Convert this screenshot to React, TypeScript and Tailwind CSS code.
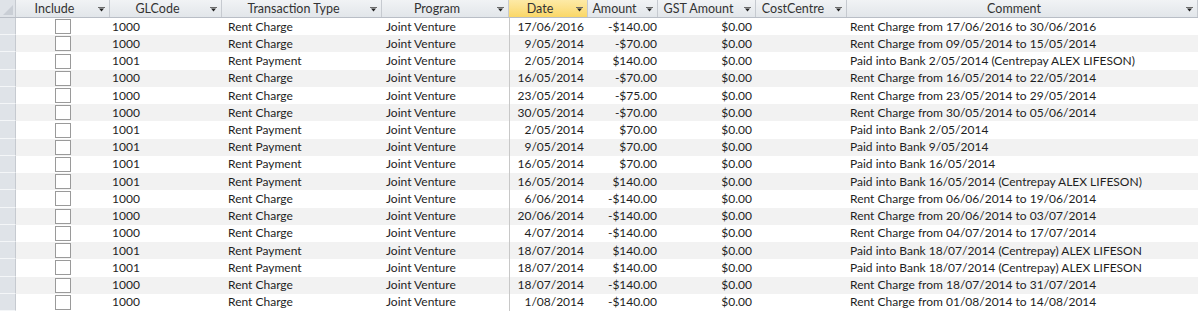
type Row = {
  gl: string;
  type: string;
  date: string;
  amount: string;
  comment: string;
};

const rows: Row[] = [
  { gl: '1000', type: 'Rent Charge', date: '17/06/2016', amount: '-$140.00', comment: 'Rent Charge from 17/06/2016 to 30/06/2016' },
  { gl: '1000', type: 'Rent Charge', date: '9/05/2014', amount: '-$70.00', comment: 'Rent Charge from 09/05/2014 to 15/05/2014' },
  { gl: '1001', type: 'Rent Payment', date: '2/05/2014', amount: '$140.00', comment: 'Paid into Bank 2/05/2014 (Centrepay ALEX LIFESON)' },
  { gl: '1000', type: 'Rent Charge', date: '16/05/2014', amount: '-$70.00', comment: 'Rent Charge from 16/05/2014 to 22/05/2014' },
  { gl: '1000', type: 'Rent Charge', date: '23/05/2014', amount: '-$75.00', comment: 'Rent Charge from 23/05/2014 to 29/05/2014' },
  { gl: '1000', type: 'Rent Charge', date: '30/05/2014', amount: '-$70.00', comment: 'Rent Charge from 30/05/2014 to 05/06/2014' },
  { gl: '1001', type: 'Rent Payment', date: '2/05/2014', amount: '$70.00', comment: 'Paid into Bank 2/05/2014' },
  { gl: '1001', type: 'Rent Payment', date: '9/05/2014', amount: '$70.00', comment: 'Paid into Bank 9/05/2014' },
  { gl: '1001', type: 'Rent Payment', date: '16/05/2014', amount: '$70.00', comment: 'Paid into Bank 16/05/2014' },
  { gl: '1001', type: 'Rent Payment', date: '16/05/2014', amount: '$140.00', comment: 'Paid into Bank 16/05/2014 (Centrepay ALEX LIFESON)' },
  { gl: '1000', type: 'Rent Charge', date: '6/06/2014', amount: '-$140.00', comment: 'Rent Charge from 06/06/2014 to 19/06/2014' },
  { gl: '1000', type: 'Rent Charge', date: '20/06/2014', amount: '-$140.00', comment: 'Rent Charge from 20/06/2014 to 03/07/2014' },
  { gl: '1000', type: 'Rent Charge', date: '4/07/2014', amount: '-$140.00', comment: 'Rent Charge from 04/07/2014 to 17/07/2014' },
  { gl: '1001', type: 'Rent Payment', date: '18/07/2014', amount: '$140.00', comment: 'Paid into Bank 18/07/2014 (Centrepay) ALEX LIFESON' },
  { gl: '1001', type: 'Rent Payment', date: '18/07/2014', amount: '$140.00', comment: 'Paid into Bank 18/07/2014 (Centrepay) ALEX LIFESON' },
  { gl: '1000', type: 'Rent Charge', date: '18/07/2014', amount: '-$140.00', comment: 'Rent Charge from 18/07/2014 to 31/07/2014' },
  { gl: '1000', type: 'Rent Charge', date: '1/08/2014', amount: '-$140.00', comment: 'Rent Charge from 01/08/2014 to 14/08/2014' },
];

const FilterArrow = () => (
  <svg width="7" height="5" viewBox="0 0 7 5" className="shrink-0">
    <rect x="0" y="0" width="7" height="1" fill="#6b6b6b" />
    <path d="M1 1.5 L6 1.5 L3.5 4.5 Z" fill="#222" />
  </svg>
);

const HeaderCell = ({ label, width, active = false }: { label: string; width: string; active?: boolean }) => (
  <div
    className={`${width} h-full flex items-center border-r border-[#c6cad0] ${
      active ? 'bg-gradient-to-b from-[#fdeaa6] to-[#fad766]' : 'bg-gradient-to-b from-[#f1f3f5] to-[#e2e6ea]'
    }`}
  >
    <span className="flex-1 text-center whitespace-nowrap leading-[17px]">{label}</span>
    <span className="w-[16px] flex justify-center items-center pt-[2px]">
      <FilterArrow />
    </span>
  </div>
);

export default function App() {
  return (
    <div
      className="w-[1198px] h-[311px] bg-white overflow-hidden flex flex-col text-[12px] text-[#1e1e1e]"
      style={{ fontFamily: 'Lato, "Open Sans", sans-serif' }}
    >
      <div className="h-[18px] flex border-b border-[#b9bec6] text-[#333] text-[12.5px]">
        <div className="w-[16px] h-full bg-[#dfe3e8] border-r border-[#c6cad0] relative">
          <svg width="10" height="10" viewBox="0 0 10 10" className="absolute right-[2px] bottom-[2px]">
            <path d="M10 0 L10 10 L0 10 Z" fill="#c9ced5" />
          </svg>
        </div>
        <HeaderCell label="Include" width="w-[94px]" />
        <HeaderCell label="GLCode" width="w-[112px]" />
        <HeaderCell label="Transaction Type" width="w-[160px]" />
        <HeaderCell label="Program" width="w-[127px]" />
        <HeaderCell label="Date" width="w-[79px]" active />
        <HeaderCell label="Amount" width="w-[70px]" />
        <HeaderCell label="GST Amount" width="w-[98px]" />
        <HeaderCell label="CostCentre" width="w-[91px]" />
        <HeaderCell label="Comment" width="flex-1" />
      </div>

      <div className="flex-1 grid grid-rows-[repeat(17,1fr)]">
        {rows.map((r, i) => (
          <div key={i} className={`flex items-stretch leading-none ${i % 2 === 1 ? 'bg-[#f2f2f2]' : 'bg-white'}`}>
            <div className="w-[16px] bg-[#dfe3e8] border-r border-[#c6cad0] border-b border-b-[#f4f6f8]" />
            <div className="w-[94px] flex items-center justify-center">
              <div className="w-[16px] h-[15px] bg-white border border-[#9a9a9a]" />
            </div>
            <div className="w-[112px] flex items-center pl-[2px]">{r.gl}</div>
            <div className="w-[160px] flex items-center pl-[6px]">{r.type}</div>
            <div className="w-[127px] flex items-center pl-[4px]">Joint Venture</div>
            <div className="w-[79px] flex items-center justify-end pr-[4px] border-l border-[#c8c8c8]">{r.date}</div>
            <div className="w-[70px] flex items-center justify-end pr-[1px]">{r.amount}</div>
            <div className="w-[98px] flex items-center justify-end pr-[4px]">$0.00</div>
            <div className="w-[91px]" />
            <div className="flex-1 flex items-center pl-[3px] whitespace-nowrap">{r.comment}</div>
          </div>
        ))}
      </div>
    </div>
  );
}
